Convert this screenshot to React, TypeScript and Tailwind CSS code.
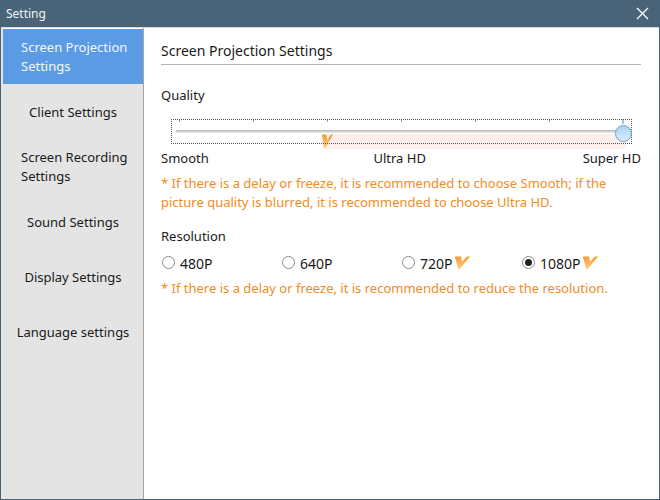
const fontFamily = "font-['Noto_Sans','Open_Sans',sans-serif]";

function Mark({ className }: { className: string }) {
  return (
    <svg viewBox="0 0 15 13" preserveAspectRatio="none" className={className}>
      <defs>
        <linearGradient id="mk" x1="0" y1="0" x2="0" y2="1">
          <stop offset="0" stopColor="#f59a23" />
          <stop offset="1" stopColor="#fbd08f" />
        </linearGradient>
      </defs>
      <path d="M0 0.5h6l1 5L12 0.5h3L4.8 13H3z" fill="url(#mk)" />
    </svg>
  );
}

function Radio({ label, checked, mark }: { label: string; checked?: boolean; mark?: boolean }) {
  return (
    <div className="flex items-center">
      <span className="w-[13px] h-[13px] rounded-full border border-[#8a8a8a] bg-white flex items-center justify-center mt-[-3px]">
        {checked && <span className="w-[7px] h-[7px] rounded-full bg-[#222]" />}
      </span>
      <span className="ml-[5px] text-[14px] leading-[20px] text-[#1a1a1a]">{label}</span>
      {mark && <Mark className="w-[15px] h-[13px] ml-[2px] mt-[-3px]" />}
    </div>
  );
}

const nav = [
  { label: "Client Settings" },
  { label: "Screen Recording Settings", left: true },
  { label: "Sound Settings" },
  { label: "Display Settings" },
  { label: "Language settings" },
];

const ticks = ["left-[8px]", "left-[82px]", "left-[156px]", "left-[230px]", "left-[304px]", "left-[378px]"];

export default function App() {
  return (
    <div className={`w-[660px] h-[500px] bg-[#496479] flex flex-col overflow-hidden ${fontFamily}`}>
      <div className="h-[27px] flex items-center justify-between pl-[6px] pr-[11px] shrink-0">
        <span className="text-[12px] text-[#f2f4f6]">Setting</span>
        <svg width="13" height="13" viewBox="0 0 13 13" stroke="#fff" strokeWidth="1.3" fill="none">
          <path d="M1 1l11 11M12 1L1 12" />
        </svg>
      </div>
      <div className="flex-1 mx-[1px] mb-[1px] bg-white flex min-h-0 border-t border-[#d9d9d9]">
        <div className="w-[143px] shrink-0 bg-[#e4e4e4] border-r border-[#a6a6a6] flex flex-col">
          <div className="h-[1px] bg-white ml-[2px] shrink-0" />
          <div className="h-[55px] ml-[2px] bg-[#5b9be3] text-[#f4f8fd] text-[13px] leading-[19px] pl-[18px] pt-[9px] shrink-0">
            Screen Projection
            <br />
            Settings
          </div>
          {nav.map((n) => (
            <div
              key={n.label}
              className={`h-[55px] shrink-0 ml-[2px] flex items-center text-[13px] leading-[19px] text-[#1a1a1a] ${
                n.left ? "pl-[18px] pr-[8px]" : "justify-center pt-[2px]"
              }`}
            >
              {n.label}
            </div>
          ))}
        </div>
        <div className="flex-1 pl-[17px] pr-[18px] pt-[13px]">
          <div className="h-[24px] border-b border-[#b5b5b5] text-[14px] leading-[19px] text-[#1a1a1a]">
            Screen Projection Settings
          </div>
          <div className="mt-[21px] text-[13px] leading-[19px] text-[#1a1a1a]">Quality</div>
          <div className="relative mt-[14px] ml-[10px] w-[461px] h-[25px]">
            {ticks.map((t) => (
              <span key={t} className={`absolute ${t} top-0 w-px h-[3px] bg-[#6b9bd8]`} />
            ))}
            <span className="absolute left-[451px] top-0 w-[2px] h-[5px] bg-[#9cc6ea]" />
            <div className="absolute left-[5px] top-[11px] w-[445px] h-[3px] bg-gradient-to-b from-[#b4b9b6] to-[#eceeed]" />
            <div className="absolute left-[151px] top-[15px] w-[304px] h-[15px] bg-[#ffeeec]" />
            <Mark className="absolute left-[151px] top-[15px] w-[11px] h-[14px]" />
            <div className="absolute inset-0 border border-dotted border-[#555]" />
            <div className="absolute left-[444px] top-[6px] w-[17px] h-[17px] rounded-full border border-[#6d9fc4] bg-gradient-to-b from-[#a9d4f5] to-[#d9edfb]" />
          </div>
          <div className="flex justify-between mt-[5px] text-[13px] leading-[19px] text-[#1a1a1a]">
            <span>Smooth</span>
            <span className="ml-[8px]">Ultra HD</span>
            <span>Super HD</span>
          </div>
          <p className="mt-[6px] text-[13px] leading-[19px] text-[#f08c1e]">
            * If there is a delay or freeze, it is recommended to choose Smooth; if the
            <br />
            picture quality is blurred, it is recommended to choose Ultra HD.
          </p>
          <div className="mt-[15px] text-[13px] leading-[19px] text-[#1a1a1a]">Resolution</div>
          <div className="grid grid-cols-[120px_120px_120px_1fr] ml-[1px] mt-[8px]">
            <Radio label="480P" />
            <Radio label="640P" />
            <Radio label="720P" mark />
            <Radio label="1080P" checked mark />
          </div>
          <p className="mt-[5px] text-[13px] leading-[19px] text-[#f08c1e]">
            * If there is a delay or freeze, it is recommended to reduce the resolution.
          </p>
        </div>
      </div>
    </div>
  );
}
